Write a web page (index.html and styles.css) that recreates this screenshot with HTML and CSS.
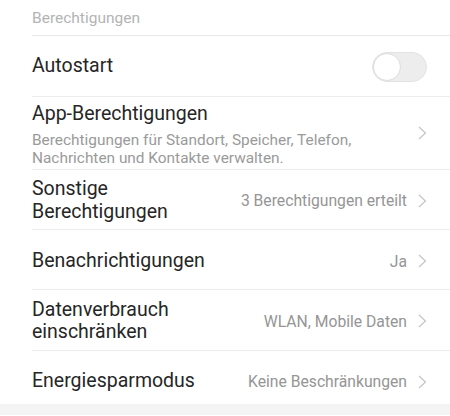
FILE: index.html
```html
<!DOCTYPE html>
<html lang="de">
<head>
<meta charset="utf-8">
<link rel="stylesheet" href="styles.css">
</head>
<body>
<div class="list">
  <div class="header">Berechtigungen</div>
  <div class="row r-auto">
    <div class="main"><div class="title">Autostart</div></div>
    <div class="toggle"><div class="knob"></div></div>
  </div>
  <div class="row r-app">
    <div class="main">
      <div class="title">App-Berechtigungen</div>
      <div class="sub">Berechtigungen für Standort, Speicher, Telefon, Nachrichten und Kontakte verwalten.</div>
    </div>
    <svg class="chev" viewBox="0 0 9 14"><path d="M1 1 L7.5 7 L1 13" /></svg>
  </div>
  <div class="row r-60">
    <div class="main"><div class="title">Sonstige<br>Berechtigungen</div></div>
    <div class="value">3 Berechtigungen erteilt</div>
    <svg class="chev" viewBox="0 0 9 14"><path d="M1 1 L7.5 7 L1 13" /></svg>
  </div>
  <div class="row r-60 r-one">
    <div class="main"><div class="title">Benachrichtigungen</div></div>
    <div class="value">Ja</div>
    <svg class="chev" viewBox="0 0 9 14"><path d="M1 1 L7.5 7 L1 13" /></svg>
  </div>
  <div class="row r-61">
    <div class="main"><div class="title">Datenverbrauch<br>einschränken</div></div>
    <div class="value">WLAN, Mobile Daten</div>
    <svg class="chev" viewBox="0 0 9 14"><path d="M1 1 L7.5 7 L1 13" /></svg>
  </div>
  <div class="row r-last">
    <div class="main"><div class="title">Energiesparmodus</div></div>
    <div class="value">Keine Beschränkungen</div>
    <svg class="chev" viewBox="0 0 9 14"><path d="M1 1 L7.5 7 L1 13" /></svg>
  </div>
</div>
<div class="footer"></div>
</body>
</html>
```

FILE: styles.css
```css
html, body {
  margin: 0;
  padding: 0;
  background: #ffffff;
  font-family: Roboto, "Liberation Sans", sans-serif;
}
.list {
  margin-left: 32px;
}
.header {
  height: 35px;
  display: flex;
  align-items: center;
  font-size: 15.5px;
  color: #b4b4b4;
  border-bottom: 1px solid #e8e8e8;
}
.row {
  display: flex;
  align-items: center;
  padding-right: 23px;
  padding-top: 2px;
  border-bottom: 1px solid #ececec;
  box-sizing: border-box;
}
.r-auto { height: 61px; padding-top: 1px; }
.r-app {
  height: 73px;
  align-items: flex-start;
  padding-top: 6px;
}
.r-app .chev { align-self: center; margin-top: -6px; }
.r-60 { height: 60px; }
.r-one { padding-top: 3px; }
.r-61 { height: 61px; }
.r-last { height: 53px; border-bottom: none; padding-top: 8px; }
.main {
  flex: 1;
  min-width: 0;
}
.title {
  font-size: 19.5px;
  line-height: 22.5px;
  color: #262626;
}
.sub {
  font-size: 15.4px;
  line-height: 18.5px;
  color: #9a9a9a;
  margin-top: 5px;
  padding-right: 20px;
}
.value {
  font-size: 15.7px;
  color: #959595;
  margin-right: 11px;
}
.chev {
  width: 9px;
  height: 14px;
  flex: none;
}
.chev path {
  fill: none;
  stroke: #c2c2c2;
  stroke-width: 1.1;
}
.toggle {
  width: 55px;
  height: 30px;
  box-sizing: border-box;
  border-radius: 15px;
  background: #ededed;
  border: 1px solid #e3e3e3;
  position: relative;
  flex: none;
}
.knob {
  position: absolute;
  left: 0;
  top: 0;
  width: 28px;
  height: 28px;
  box-sizing: border-box;
  border-radius: 50%;
  background: #ffffff;
  border: 1.5px solid #dcdcdc;
}
.footer {
  height: 11px;
  background: #f4f4f4;
}
```
